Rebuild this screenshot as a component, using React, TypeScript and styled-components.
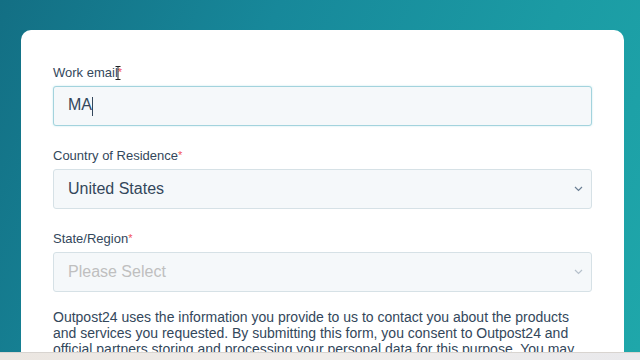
import React from "react";
import styled, { createGlobalStyle } from "styled-components";

const Global = createGlobalStyle`
  html, body { margin: 0; padding: 0; }
  body { width: 640px; height: 360px; overflow: hidden; font-family: "Liberation Sans", Arial, sans-serif; }
`;

const Page = styled.div`
  width: 640px;
  height: 360px;
  display: flex;
  flex-direction: column;
  overflow: hidden;
`;

const Stage = styled.div`
  flex: 1;
  min-height: 0;
  overflow: hidden;
  padding: 30px 16px 0 21px;
  background: linear-gradient(115deg, #136f84 0%, #17889a 35%, #1b9ba4 70%, #1fa7aa 100%);
`;

const Card = styled.div`
  background: #ffffff;
  border-radius: 10px 10px 0 0;
  height: 100%;
  padding: 35px 32px 0 32px;
  box-sizing: border-box;
  overflow: hidden;
`;

const Fields = styled.div`
  display: flex;
  flex-direction: column;
  gap: 22px;
`;

const Field = styled.div`
  display: flex;
  flex-direction: column;
`;

const Label = styled.label`
  position: relative;
  font-size: 13px;
  line-height: 16px;
  color: #33475b;
  margin-bottom: 5px;
`;

const Req = styled.span`
  color: #f2545b;
  font-size: 11px;
  vertical-align: top;
  position: relative;
  top: -1px;
`;

const Box = styled.div<{ $focused?: boolean }>`
  position: relative;
  height: 40px;
  box-sizing: border-box;
  border: 1px solid ${(p) => (p.$focused ? "#a3d3dd" : "#d6e1e6")};
  box-shadow: ${(p) => (p.$focused ? "0 0 2px rgba(0,164,189,0.25)" : "none")};
  background: #f5f8fa;
  border-radius: 3px;
  display: flex;
  align-items: center;
  padding: 0 8px 0 14px;
  font-size: 16px;
  color: #33475b;
`;

const Value = styled.span<{ $placeholder?: boolean }>`
  color: ${(p) => (p.$placeholder ? "#bfbfbf" : "#33475b")};
  flex: 1;
`;

const Caret = styled.span`
  display: inline-block;
  width: 1px;
  height: 19px;
  background: #33475b;
  vertical-align: middle;
`;

const Chevron = styled.svg<{ $faint?: boolean }>`
  width: 9px;
  height: 6px;
  opacity: ${(p) => (p.$faint ? 0.45 : 1)};
`;

const Beam = styled.svg`
  position: absolute;
  left: 62px;
  top: 1px;
`;

const Para = styled.p`
  margin: 17px 0 0 0;
  font-size: 14px;
  line-height: 16px;
  color: #33475b;
  padding-right: 6px;
`;

const Taskbar = styled.div`
  height: 7px;
  background: linear-gradient(90deg, #ebe6e1 0%, #efece9 50%, #e9e9ec 100%);
  border-top: 1px solid #d8d4d0;
`;

const ChevronIcon = ({ faint }: { faint?: boolean }) => (
  <Chevron $faint={faint} viewBox="0 0 9 6">
    <path d="M1 1 L4.5 4.5 L8 1" fill="none" stroke="#6b7f94" strokeWidth="1.2" />
  </Chevron>
);

export default function App() {
  return (
    <Page>
      <Global />
      <Stage>
        <Card>
          <Fields>
            <Field>
              <Label>
                Work email<Req>*</Req>
                <Beam width="6" height="14" viewBox="0 0 6 14">
                  <path d="M0.5 0.5 H5.5 M3 0.5 V13.5 M0.5 13.5 H5.5" stroke="#222" strokeWidth="1" fill="none" />
                </Beam>
              </Label>
              <Box $focused>
                <Value>
                  MA<Caret />
                </Value>
              </Box>
            </Field>
            <Field>
              <Label>
                Country of Residence<Req>*</Req>
              </Label>
              <Box>
                <Value>United States</Value>
                <ChevronIcon />
              </Box>
            </Field>
            <Field>
              <Label>
                State/Region<Req>*</Req>
              </Label>
              <Box>
                <Value $placeholder>Please Select</Value>
                <ChevronIcon faint />
              </Box>
            </Field>
          </Fields>
          <Para>
            Outpost24 uses the information you provide to us to contact you about the products
            and services you requested. By submitting this form, you consent to Outpost24 and
            official partners storing and processing your personal data for this purpose. You may
            unsubscribe from these communications at any time.
          </Para>
        </Card>
      </Stage>
      <Taskbar />
    </Page>
  );
}
